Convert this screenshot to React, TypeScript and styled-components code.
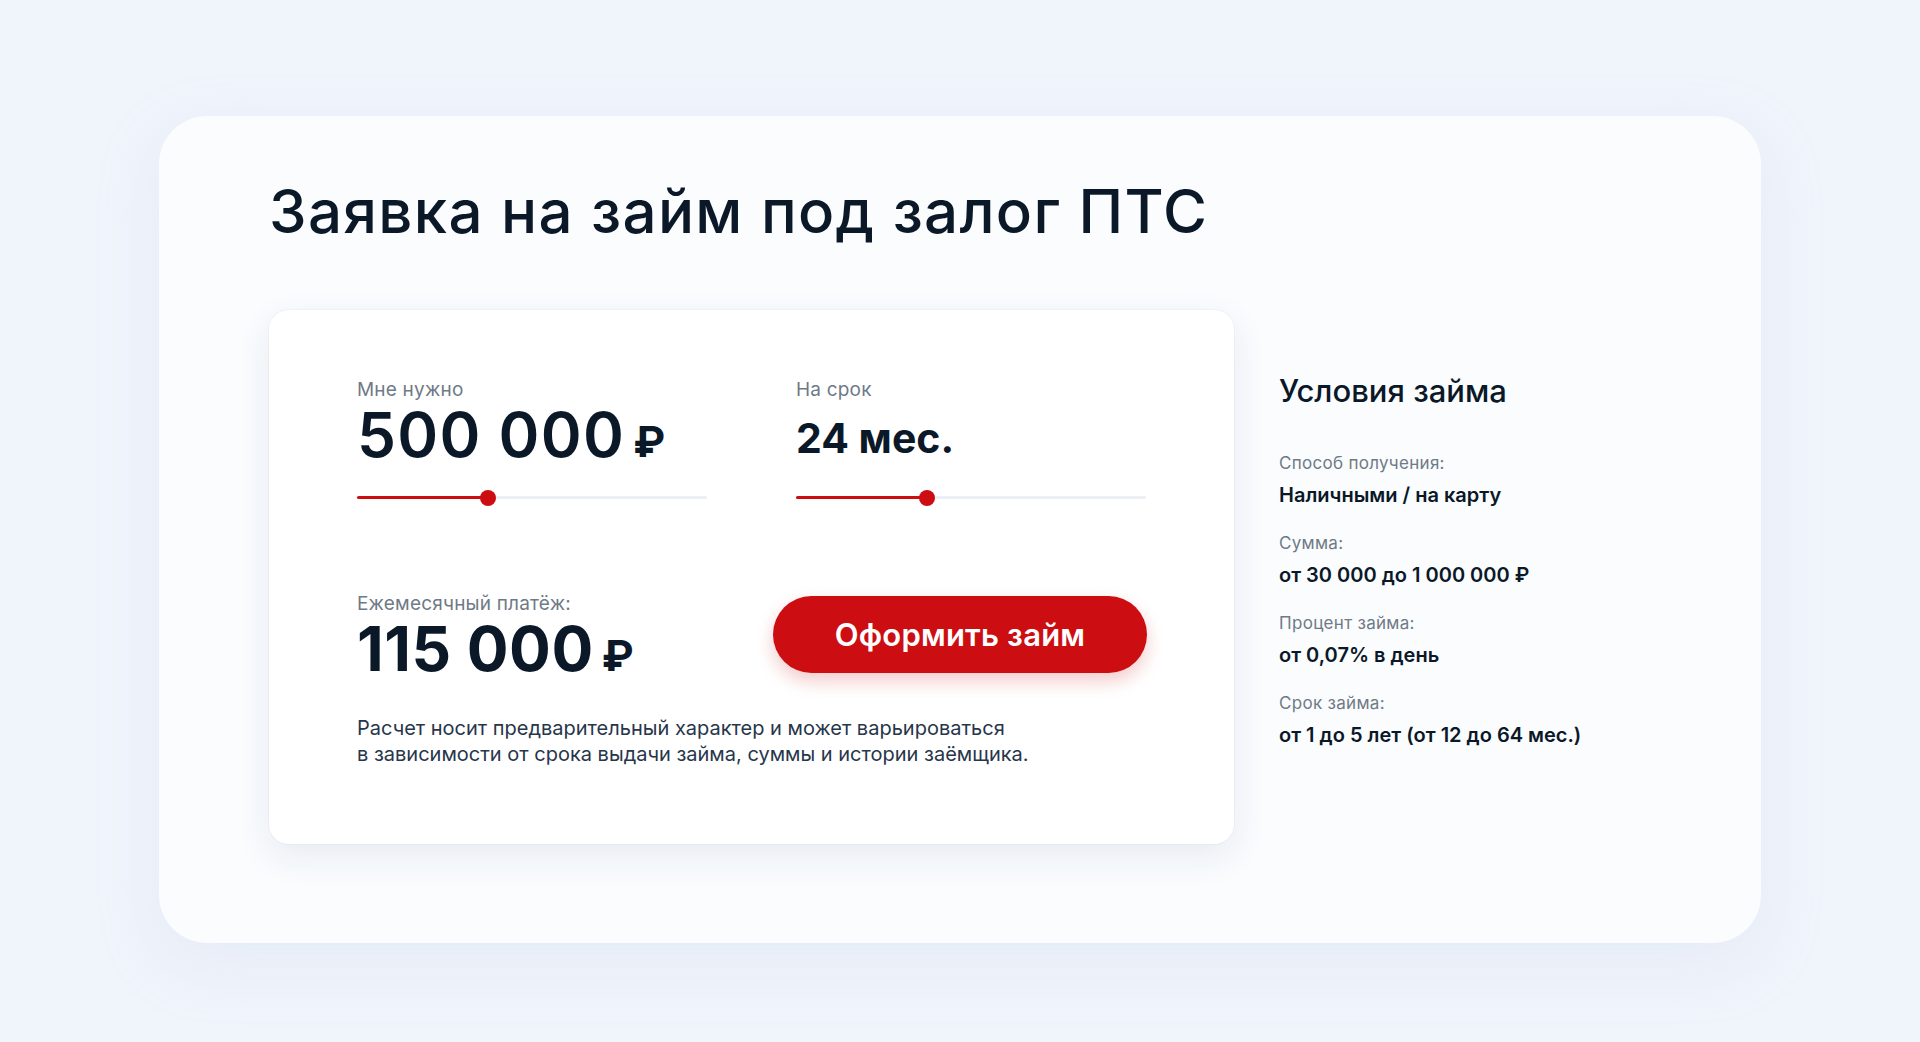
import React from 'react';
import styled, { createGlobalStyle } from 'styled-components';

const TEXT_DARK = '#0b1828';
const TEXT_GRAY = '#6f7a86';
const RED = '#cc0e12';

const GlobalStyle = createGlobalStyle`
  body {
    margin: 0;
    background: #f0f4fb;
    font-family: Inter, "Noto Sans", "Liberation Sans", sans-serif;
    color: ${TEXT_DARK};
  }
`;

const Page = styled.div`
  padding: 116px 159px 99px;
`;

const Card = styled.section`
  background: #fafcfe;
  border-radius: 48px;
  height: 827px;
  box-sizing: border-box;
  padding: 59px 110px 0;
  box-shadow: 0 20px 60px rgba(200, 212, 235, 0.25);
`;

const Title = styled.h1`
  margin: 0;
  font-size: 60px;
  line-height: 72px;
  font-weight: 500;
  letter-spacing: 1.3px;
  color: ${TEXT_DARK};
`;

const Body = styled.div`
  display: flex;
  gap: 45px;
  margin-top: 63px;
`;

const Calculator = styled.div`
  width: 965px;
  height: 534px;
  flex-shrink: 0;
  box-sizing: border-box;
  background: #ffffff;
  border-radius: 20px;
  padding: 68px 88px 0;
  display: grid;
  grid-template-columns: 350px 350px;
  column-gap: 89px;
  align-content: start;
  box-shadow: 0 12px 36px rgba(30, 55, 110, 0.09), 0 0 0 1px rgba(30, 55, 110, 0.03);
`;

const Field = styled.div`
  display: flex;
  flex-direction: column;
`;

const Label = styled.div`
  font-size: 19px;
  line-height: 24px;
  font-weight: 400;
  letter-spacing: 0.2px;
  color: ${TEXT_GRAY};
  margin-bottom: 2px;
`;

const Value = styled.div<{ $size: number; $bold?: boolean; $shift?: number; $spacing?: number }>`
  font-size: ${(p) => p.$size}px;
  line-height: 62px;
  height: 62px;
  font-weight: ${(p) => (p.$bold ? 700 : 600)};
  letter-spacing: ${(p) => p.$spacing ?? 0}px;
  color: ${TEXT_DARK};
  padding-top: ${(p) => p.$shift ?? 0}px;
  box-sizing: border-box;
  white-space: nowrap;
`;

const Rub = styled.span`
  font-size: 43px;
  font-weight: 700;
  letter-spacing: 0;
  margin-left: 8px;
`;

const Slider = styled.div`
  position: relative;
  height: 16px;
  margin-top: 24px;
`;

const Track = styled.div`
  position: absolute;
  left: 0;
  right: 0;
  top: 6px;
  height: 3px;
  border-radius: 2px;
  background: #eceff4;
`;

const Fill = styled.div`
  position: absolute;
  left: 0;
  top: 6px;
  height: 3px;
  border-radius: 2px;
  background: ${RED};
`;

const Thumb = styled.div`
  position: absolute;
  top: 0;
  width: 16px;
  height: 16px;
  margin-left: -8px;
  border-radius: 50%;
  background: ${RED};
`;

const Payment = styled.div`
  display: flex;
  flex-direction: column;
  margin-top: 86px;
`;

const ButtonCell = styled.div`
  margin-top: 90px;
  display: flex;
  justify-content: flex-end;
`;

const SubmitButton = styled.button`
  flex-shrink: 0;
  width: 374px;
  height: 77px;
  margin-right: -1px;
  border: none;
  border-radius: 40px;
  background: ${RED};
  color: #ffffff;
  font-family: inherit;
  font-size: 31px;
  font-weight: 600;
  letter-spacing: 0.2px;
  cursor: pointer;
  box-shadow: 0 8px 18px rgba(204, 14, 18, 0.22);
`;

const Note = styled.p`
  grid-column: 1 / -1;
  margin: 35px 0 0;
  font-size: 20px;
  line-height: 26px;
  color: #27364a;
`;

const Conditions = styled.aside`
  padding-top: 62px;
  display: flex;
  flex-direction: column;
`;

const ConditionsTitle = styled.h2`
  margin: 0 0 42px;
  font-size: 31px;
  line-height: 38px;
  font-weight: 500;
  color: ${TEXT_DARK};
`;

const TermList = styled.dl`
  margin: 0;
`;

const Term = styled.dt`
  font-size: 17px;
  line-height: 22px;
  letter-spacing: 0.3px;
  color: ${TEXT_GRAY};
`;

const Definition = styled.dd`
  margin: 10px 0 26px;
  font-size: 20px;
  line-height: 22px;
  font-weight: 600;
  color: ${TEXT_DARK};
`;

const RangeSlider: React.FC<{ percent: number }> = ({ percent }) => (
  <Slider>
    <Track />
    <Fill style={{ width: `${percent}%` }} />
    <Thumb style={{ left: `${percent}%` }} />
  </Slider>
);

const terms = [
  ['Способ получения:', 'Наличными / на карту'],
  ['Сумма:', 'от 30 000 до 1 000 000 ₽'],
  ['Процент займа:', 'от 0,07% в день'],
  ['Срок займа:', 'от 1 до 5 лет (от 12 до 64 мес.)'],
];

const App: React.FC = () => (
  <Page>
    <GlobalStyle />
    <Card>
      <Title>Заявка на займ под залог ПТС</Title>
      <Body>
        <Calculator>
          <Field>
            <Label>Мне нужно</Label>
            <Value $size={62} $spacing={1.3}>
              500 000<Rub>₽</Rub>
            </Value>
            <RangeSlider percent={37.5} />
          </Field>
          <Field>
            <Label>На срок</Label>
            <Value $size={41} $bold $shift={3}>
              24 мес.
            </Value>
            <RangeSlider percent={37.5} />
          </Field>
          <Payment>
            <Label>Ежемесячный платёж:</Label>
            <Value $size={62} $bold $spacing={0.5}>
              115 000<Rub>₽</Rub>
            </Value>
          </Payment>
          <ButtonCell>
            <SubmitButton>Оформить займ</SubmitButton>
          </ButtonCell>
          <Note>
            Расчет носит предварительный характер и может варьироваться
            <br />в зависимости от срока выдачи займа, суммы и истории заёмщика.
          </Note>
        </Calculator>
        <Conditions>
          <ConditionsTitle>Условия займа</ConditionsTitle>
          <TermList>
            {terms.map(([term, value]) => (
              <React.Fragment key={term}>
                <Term>{term}</Term>
                <Definition>{value}</Definition>
              </React.Fragment>
            ))}
          </TermList>
        </Conditions>
      </Body>
    </Card>
  </Page>
);

export default App;
